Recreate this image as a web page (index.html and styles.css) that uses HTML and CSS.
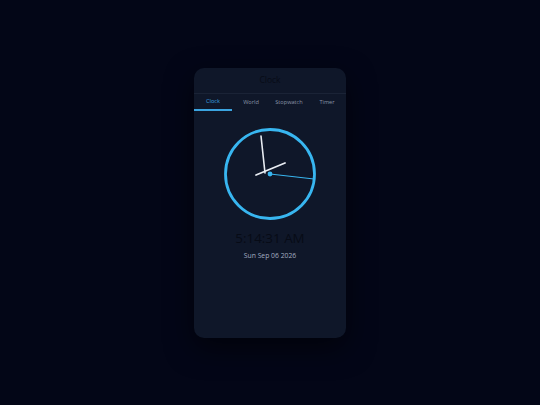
FILE: index.html
```html
<!DOCTYPE html>
<html lang="en">
<head>
<meta charset="utf-8">
<title>Clock</title>
<link rel="stylesheet" href="styles.css">
</head>
<body>
<div class="card">
  <div class="header">Clock</div>
  <div class="tabs">
    <div class="tab active">Clock</div>
    <div class="tab">World</div>
    <div class="tab">Stopwatch</div>
    <div class="tab">Timer</div>
  </div>
  <div class="face">
    <svg class="dial" width="100" height="100" viewBox="0 0 100 100">
      <circle cx="50" cy="50" r="44.5" fill="none" stroke="#38b6f0" stroke-width="2.8"/>
      <line x1="41" y1="12" x2="45" y2="49" stroke="#e8ecf2" stroke-width="1.6" stroke-linecap="round"/>
      <line x1="36" y1="51" x2="65" y2="39" stroke="#e8ecf2" stroke-width="1.8" stroke-linecap="round"/>
      <line x1="50" y1="50" x2="94" y2="55" stroke="#38b6f0" stroke-width="1"/>
      <circle cx="50" cy="50" r="2.4" fill="#38b6f0"/>
    </svg>
  </div>
  <div class="time">5:14:31 AM</div>
  <div class="date">Sun Sep 06 2026</div>
</div>
</body>
</html>
```
FILE: styles.css
```css
html, body {
  margin: 0;
  padding: 0;
}
body {
  background: #030617;
  height: 100vh;
  display: flex;
  align-items: center;
  justify-content: center;
  font-family: "Open Sans", "Noto Sans", sans-serif;
}
.card {
  width: 152px;
  height: 270px;
  background: #0f1729;
  border-radius: 10px;
  box-shadow: 0 10px 28px rgba(0, 0, 0, 0.55);
  display: flex;
  flex-direction: column;
  overflow: hidden;
}
.header {
  height: 25px;
  line-height: 24px;
  text-align: center;
  font-size: 8.5px;
  color: #070b16;
  border-bottom: 1px solid #1a2336;
}
.tabs {
  display: flex;
  height: 17px;
}
.tab {
  flex: 1;
  text-align: center;
  font-size: 5.6px;
  line-height: 16px;
  color: #8a95a8;
  border-bottom: 1px solid transparent;
}
.tab.active {
  color: #3ba4e0;
  border-bottom: 2px solid #3ba4e0;
  line-height: 15px;
}
.face {
  display: flex;
  justify-content: center;
  margin-top: 13px;
}
.dial {
  display: block;
}
.time {
  margin-top: 5px;
  text-align: center;
  font-size: 13.4px;
  line-height: 19px;
  color: #070b16;
}
.date {
  margin-top: 3px;
  text-align: center;
  font-size: 6.8px;
  line-height: 10px;
  color: #a3adc0;
}
```
